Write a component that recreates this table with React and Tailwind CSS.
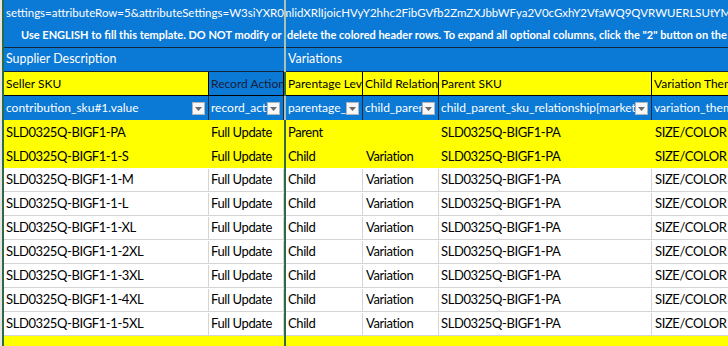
import React from "react";

const BLUE = "bg-[#0b79d6]";

const skus = [
  { sku: "SLD0325Q-BIGF1-PA", level: "Parent", rel: "", parent: "SLD0325Q-BIGF1-PA", hl: true },
  { sku: "SLD0325Q-BIGF1-1-S", level: "Child", rel: "Variation", parent: "SLD0325Q-BIGF1-PA", hl: true },
  { sku: "SLD0325Q-BIGF1-1-M", level: "Child", rel: "Variation", parent: "SLD0325Q-BIGF1-PA" },
  { sku: "SLD0325Q-BIGF1-1-L", level: "Child", rel: "Variation", parent: "SLD0325Q-BIGF1-PA" },
  { sku: "SLD0325Q-BIGF1-1-XL", level: "Child", rel: "Variation", parent: "SLD0325Q-BIGF1-PA" },
  { sku: "SLD0325Q-BIGF1-1-2XL", level: "Child", rel: "Variation", parent: "SLD0325Q-BIGF1-PA" },
  { sku: "SLD0325Q-BIGF1-1-3XL", level: "Child", rel: "Variation", parent: "SLD0325Q-BIGF1-PA" },
  { sku: "SLD0325Q-BIGF1-1-4XL", level: "Child", rel: "Variation", parent: "SLD0325Q-BIGF1-PA" },
  { sku: "SLD0325Q-BIGF1-1-5XL", level: "Child", rel: "Variation", parent: "SLD0325Q-BIGF1-PA" },
];

// little excel filter button
const DropBtn = () => (
  <div className="shrink-0 mr-[3px] w-[13px] h-[13px] bg-[#f7f7f7] border border-[#b4b4b4] flex items-center justify-center">
    <svg width="7" height="4" viewBox="0 0 7 4" className="mt-[2px]">
      <path d="M0 0 L7 0 L3.5 4 Z" fill="#6a6a6a" />
    </svg>
  </div>
);

const FilterCell = ({ w, text }) => (
  <div className={`${w} h-full flex items-center border-r border-[#1c2a3a] shrink-0`}>
    <span className="flex-1 min-w-0 overflow-hidden whitespace-nowrap pl-[2px] text-white">{text}</span>
    <DropBtn />
  </div>
);

const HeadCell = ({ w, text, blue }) => (
  <div
    className={`${w} h-full flex items-center border-r border-black shrink-0 overflow-hidden whitespace-nowrap pl-[2px] ${
      blue ? `${BLUE} text-[#18203a]` : "bg-[#ffff00] text-black"
    }`}
  >
    {text}
  </div>
);

const DataCell = ({ w, text, hl, pl = "pl-[2px]" }) => (
  <div
    className={`${w} h-full flex items-center shrink-0 overflow-hidden whitespace-nowrap ${pl} ${
      hl ? "" : "border-r border-[#d4d4d4]"
    }`}
  >
    {text}
  </div>
);

const dataRowCls = (hl) =>
  `h-[24px] flex pt-[1px] text-[13px] tracking-[-0.4px] ${hl ? "bg-[#ffff00]" : "bg-white border-b border-[#d4d4d4]"}`;

export default function App() {
  return (
    <div className="w-[728px] h-[346px] overflow-hidden flex bg-white text-[12px] text-black font-['Lato','Liberation_Sans',sans-serif]">
      {/* row header gutter */}
      <div className="w-[2px] h-full bg-[#e6e6e6] shrink-0" />
      <div className="w-[2px] h-full bg-[#2f6b45] shrink-0" />

      {/* frozen pane: A-B */}
      <div className="w-[280px] shrink-0 flex flex-col overflow-hidden">
        <div className={`h-[24px] ${BLUE} flex items-center pt-[2px] pl-[2px] text-[11.5px] text-white whitespace-nowrap overflow-hidden`}>
          settings=attributeRow=5&amp;attributeSettings=W3siYXR0cmlidXRlIjoi
        </div>
        <div className={`h-[24px] ${BLUE} flex items-center pl-[17px] text-[11px] font-bold text-white whitespace-nowrap overflow-hidden border-b border-[#14263a]`}>
          Use ENGLISH to fill this template. DO NOT modify or delete
        </div>
        <div className={`h-[24px] ${BLUE} flex items-center pl-[2px] text-[12.4px] text-white border-b border-[#14263a]`}>
          Supplier Description
        </div>
        <div className="h-[24px] flex border-b border-black">
          <HeadCell w="w-[205px]" text="Seller SKU" />
          <HeadCell w="w-[75px]" text="Record Action" blue />
        </div>
        <div className={`h-[24px] flex ${BLUE}`}>
          <FilterCell w="w-[205px]" text="contribution_sku#1.value" />
          <FilterCell w="w-[75px]" text="record_action#1.value" />
        </div>
        {skus.map((r) => (
          <div key={r.sku} className={dataRowCls(r.hl)}>
            <DataCell w="w-[205px]" text={r.sku} hl={r.hl} />
            <DataCell w="w-[75px]" text="Full Update" hl={r.hl} />
          </div>
        ))}
        <div className="flex-1 bg-[#ffff00]" />
      </div>

      {/* freeze line */}
      <div className="w-[2px] shrink-0 flex flex-col">
        <div className="h-[72px] bg-[#a9c2b6]" />
        <div className="h-[24px] bg-[#2f6b45]" />
        <div className="h-[24px] bg-[#a9c2b6]" />
        <div className="flex-1 bg-[#2f6b45]" />
      </div>

      {/* scrolling pane: C-F */}
      <div className="flex-1 min-w-0 flex flex-col overflow-hidden">
        <div className={`h-[24px] ${BLUE} flex items-center pt-[2px] text-[11.5px] text-white whitespace-nowrap overflow-hidden`}>
          <span className="ml-[-4px]">mlidXRlIjoicHVyY2hhc2FibGVfb2ZmZXJbbWFya2V0cGxhY2VfaWQ9QVRWUERLSUtYMERFQ</span>
        </div>
        <div className={`h-[24px] ${BLUE} flex items-center pl-[1px] text-[11px] font-bold text-white whitespace-nowrap overflow-hidden border-b border-[#14263a]`}>
          delete the colored header rows. To expand all optional columns, click the "2" button on the left
        </div>
        <div className={`h-[24px] ${BLUE} flex items-center pl-[2px] text-[12.4px] text-white border-b border-[#14263a]`}>
          Variations
        </div>
        <div className="h-[24px] flex border-b border-black">
          <HeadCell w="w-[77px]" text="Parentage Level" />
          <HeadCell w="w-[76px]" text="Child Relationship" />
          <HeadCell w="w-[213px]" text="Parent SKU" />
          <HeadCell w="w-[120px]" text="Variation Theme" />
        </div>
        <div className={`h-[24px] flex ${BLUE}`}>
          <FilterCell w="w-[77px]" text="parentage_level#1.value" />
          <FilterCell w="w-[76px]" text="child_parent_sku_relationship" />
          <FilterCell w="w-[213px]" text="child_parent_sku_relationship[marketplace_id=ATVPDKIKX0DER]" />
          <FilterCell w="w-[120px]" text="variation_theme#1.name" />
        </div>
        {skus.map((r) => (
          <div key={r.sku} className={dataRowCls(r.hl)}>
            <DataCell w="w-[77px]" text={r.level} hl={r.hl} />
            <DataCell w="w-[76px]" text={r.rel} hl={r.hl} pl="pl-[3px]" />
            <DataCell w="w-[213px]" text={r.parent} hl={r.hl} />
            <DataCell w="w-[120px]" text="SIZE/COLOR" hl={r.hl} pl="pl-[3px]" />
          </div>
        ))}
        <div className="flex-1 bg-[#ffff00]" />
      </div>
    </div>
  );
}
